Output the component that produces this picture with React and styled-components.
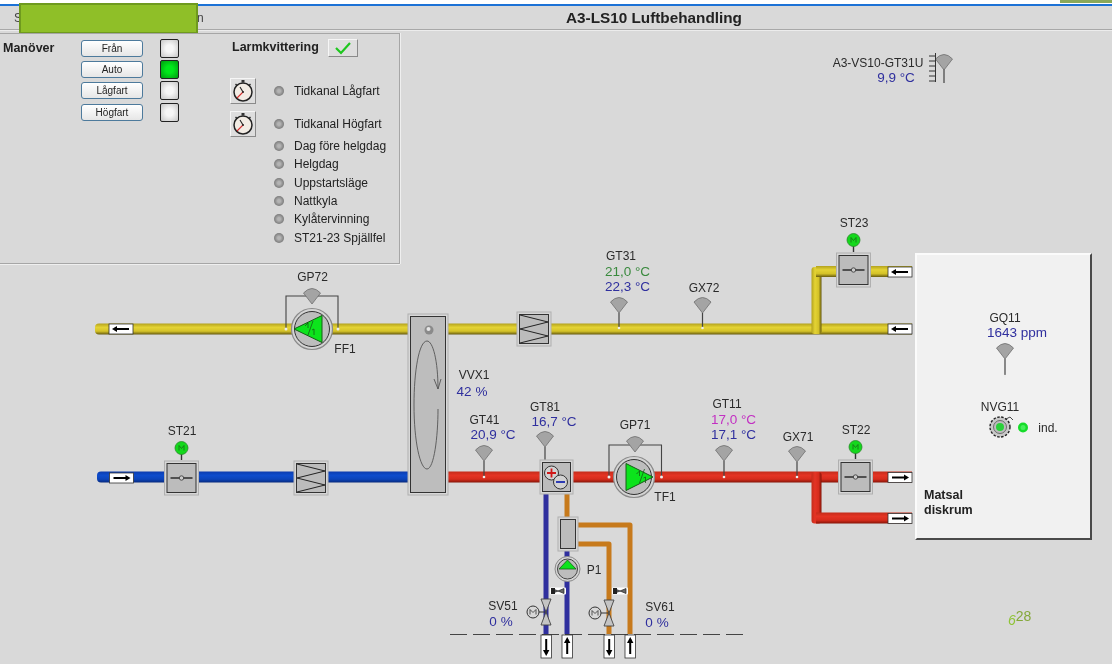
import React from "react";
import styled, { createGlobalStyle } from "styled-components";

const GlobalStyle = createGlobalStyle`
  html, body {
    margin: 0;
    padding: 0;
    background: #d9d9d9;
  }
  body {
    font-family: "Liberation Sans", Arial, sans-serif;
    color: #222;
    overflow: hidden;
  }
`;

const Page = styled.div`
  position: relative;
  width: 1112px;
  height: 664px;
  overflow: hidden;
  background: #d9d9d9;
  display: flex;
  flex-direction: column;
  filter: blur(0.5px);
`;

const TopStrip = styled.div`
  height: 4px;
  background: #fff;
  border-bottom: 2px solid #1c72d6;
  flex: none;
`;

const TitleBar = styled.div`
  flex: none;
  height: 23px;
  display: flex;
  align-items: center;
  padding-left: 14px;
  border-bottom: 1px solid #a8a8a8;
  box-shadow: 0 1px 0 #ececec;
  font-size: 12px;
  color: #444;
`;

const Crumb = styled.span`
  width: ${(props) => props.$w}px;
`;

const Title = styled.h1`
  margin: 0 0 0 363px;
  font-size: 15.3px;
  font-weight: bold;
  color: #222;
`;

const GreenMask = styled.div`
  position: absolute;
  left: 19px;
  top: 3px;
  width: 179px;
  height: 31px;
  box-sizing: border-box;
  background: #8fbf28;
  border: 2px solid #6f9a1e;
`;

const CornerMark = styled.div`
  position: absolute;
  right: 0;
  top: 0;
  width: 52px;
  height: 3px;
  background: #8aa85a;
`;

const Workspace = styled.div`
  position: relative;
  flex: 1;
  padding-top: 3px;
`;

const Panel = styled.section`
  position: relative;
  z-index: 1;
  width: 400px;
  height: 231px;
  box-sizing: border-box;
  display: flex;
  padding-top: 5px;
  border: 1px solid #a6a6a6;
  border-left: none;
  box-shadow: 0 1px 0 #efefef, 1px 0 0 #efefef;
`;

const BoldLabel = styled.div`
  font-size: 12.5px;
  font-weight: bold;
  line-height: 15px;
  color: #222;
`;

const ManeuverColumn = styled.div`
  width: 81px;
  box-sizing: border-box;
  padding: 2px 0 0 3px;
`;

const ControlColumn = styled.div`
  width: 149px;
  margin-top: -1.5px;
`;

const ControlRow = styled.div`
  display: grid;
  grid-template-columns: 62px 19px;
  column-gap: 17px;
  align-items: center;
  height: 21.3px;
`;

const ModeButton = styled.button`
  width: 62px;
  height: 17px;
  padding: 0;
  border: 1px solid #4d7a9c;
  border-radius: 3px;
  background: linear-gradient(#fff, #e6e6e6);
  font: 10px "Liberation Sans", Arial, sans-serif;
  color: #222;
`;

const ModeLamp = styled.div`
  width: 19px;
  height: 19px;
  box-sizing: border-box;
  border: 1px solid #222;
  border-radius: 2px;
  background: ${(props) =>
    props.$on
      ? "radial-gradient(circle, #00e81a 30%, #009a10 100%)"
      : "radial-gradient(circle, #f6f6f6 30%, #c6c6c6 100%)"};
`;

const StatusColumn = styled.div`
  width: 168px;
`;

const AlarmRow = styled.div`
  display: flex;
  align-items: center;
  height: 17px;
  padding-left: 2px;
  margin-bottom: 22px;
`;

const BevelButton = styled.button`
  display: flex;
  align-items: center;
  justify-content: center;
  padding: 0;
  width: ${(props) => props.$w}px;
  height: ${(props) => props.$h}px;
  margin-left: ${(props) => props.$ml || 0}px;
  background: #dedede;
  border: 1px solid;
  border-color: #f6f6f6 #8a8a8a #8a8a8a #f6f6f6;
`;

const ChannelRow = styled.div`
  display: grid;
  grid-template-columns: 44px 20px 1fr;
  align-items: center;
  height: ${(props) => props.$h}px;
  margin-bottom: ${(props) => props.$mb || 0}px;
  font-size: 12px;
  color: #222;
`;

const ChannelDot = styled.span`
  grid-column: 2;
  width: 10px;
  height: 10px;
  border-radius: 50%;
  background: radial-gradient(circle, #b4b4b4 20%, #5a5a5a 100%);
`;

const Canvas = styled.div`
  position: absolute;
  left: 0;
  top: -29px;
  width: 1112px;
  height: 664px;
`;

const DiagramArt = styled.svg`
  position: absolute;
  left: 0;
  top: 0;
`;

const Room = styled.div`
  position: absolute;
  left: 915px;
  top: 252px;
  width: 177px;
  height: 287px;
  box-sizing: border-box;
  background: #f1f1f1;
  border: 2px solid;
  border-color: #fbfbfb #4a4a4a #4a4a4a #fbfbfb;
  display: flex;
  flex-direction: column;
  justify-content: flex-end;
  padding: 0 0 20px 7px;
`;

const Tag = styled.div`
  position: absolute;
  left: ${(props) => props.$x}px;
  top: ${(props) => props.$y}px;
  transform: translate(-50%, -50%);
  white-space: nowrap;
  line-height: 1;
  font-size: ${(props) => (props.$tone ? 13.5 : 12)}px;
  color: ${(props) =>
    props.$tone === "green"
      ? "#3a8a3e"
      : props.$tone === "pink"
        ? "#c22fc2"
        : props.$tone === "blue"
          ? "#2f2f9e"
          : "#2a2a2a"};
`;

const PageMark = styled.div`
  position: absolute;
  left: 1008px;
  top: 612px;
  font-size: 14px;
  line-height: 1;
  font-style: italic;
  color: #8fc436;
`;

const MarkSup = styled.span`
  position: relative;
  top: -4px;
  font-style: normal;
  color: #84a83a;
`;

const labels = [
  { text: "A3-VS10-GT31U", x: 878, y: 62 },
  { text: "9,9 °C", x: 896, y: 77, tone: "blue" },
  { text: "GP72", x: 312.5, y: 276 },
  { text: "FF1", x: 345, y: 348 },
  { text: "ST21", x: 182, y: 430 },
  { text: "VVX1", x: 474, y: 374 },
  { text: "42 %", x: 472, y: 391, tone: "blue" },
  { text: "GT41", x: 484.5, y: 419 },
  { text: "20,9 °C", x: 493, y: 433.5, tone: "blue" },
  { text: "GT81", x: 545, y: 406 },
  { text: "16,7 °C", x: 554, y: 420.5, tone: "blue" },
  { text: "GP71", x: 635, y: 424 },
  { text: "TF1", x: 665, y: 496 },
  { text: "P1", x: 594, y: 569 },
  { text: "SV51", x: 503, y: 605 },
  { text: "0 %", x: 501, y: 621, tone: "blue" },
  { text: "SV61", x: 660, y: 606 },
  { text: "0 %", x: 657, y: 622, tone: "blue" },
  { text: "GT31", x: 621, y: 255 },
  { text: "21,0 °C", x: 627.5, y: 271, tone: "green" },
  { text: "22,3 °C", x: 627.5, y: 285.5, tone: "blue" },
  { text: "GX72", x: 704, y: 286.5 },
  { text: "GT11", x: 727, y: 403 },
  { text: "17,0 °C", x: 733.5, y: 419, tone: "pink" },
  { text: "17,1 °C", x: 733.5, y: 434, tone: "blue" },
  { text: "GX71", x: 798, y: 436 },
  { text: "ST22", x: 856, y: 429 },
  { text: "ST23", x: 854, y: 222 },
  { text: "GQ11", x: 1005, y: 317 },
  { text: "1643 ppm", x: 1017, y: 332, tone: "blue" },
  { text: "NVG11", x: 1000, y: 406 },
  { text: "ind.", x: 1048, y: 427 },
];

const channels = [
  { name: "Dag före helgdag" },
  { name: "Helgdag" },
  { name: "Uppstartsläge" },
  { name: "Nattkyla" },
  { name: "Kylåtervinning" },
  { name: "ST21-23 Spjällfel" },
];

const modes = [
  { name: "Från" },
  { name: "Auto", on: true },
  { name: "Lågfart" },
  { name: "Högfart" },
];

const CheckIcon = () => (
  <svg width="18" height="14" viewBox="0 0 18 14">
    <path d="M2 7 L7 12 L16 2" fill="none" stroke="#1ec71e" strokeWidth="2.2" />
  </svg>
);

const ClockIcon = () => (
  <svg width="24" height="24" viewBox="0 0 24 24">
    <rect x="10.5" y="1" width="3" height="2.5" fill="#333" />
    <line x1="4.5" y1="5" x2="6.5" y2="7" stroke="#333" strokeWidth="1.5" />
    <line x1="19.5" y1="5" x2="17.5" y2="7" stroke="#333" strokeWidth="1.5" />
    <circle cx="12" cy="13" r="9" fill="#f2ece4" stroke="#222" strokeWidth="1.5" />
    <line x1="12" y1="13" x2="9" y2="8" stroke="#222" strokeWidth="1.1" />
    <line x1="12" y1="13" x2="6" y2="19" stroke="#d63030" strokeWidth="1.1" />
    <circle cx="12" cy="13" r="1" fill="#222" />
  </svg>
);

const PipeGradients = () => (
  <defs>
    {[
      ["yellow", "#b3a21e", "#e4d334", "#d4c228", "#665a0e"],
      ["blue", "#0c3cae", "#0e4ccc", "#0c44ba", "#072a7e"],
      ["red", "#c42c1a", "#e43424", "#d62c1c", "#861408"],
    ].map(([id, a, b, c, d]) => (
      <React.Fragment key={id}>
        <linearGradient id={`${id}H`} x1="0" y1="0" x2="0" y2="1">
          <stop offset="0" stopColor={a} />
          <stop offset="0.35" stopColor={b} />
          <stop offset="0.7" stopColor={c} />
          <stop offset="1" stopColor={d} />
        </linearGradient>
        <linearGradient id={`${id}V`} x1="0" y1="0" x2="1" y2="0">
          <stop offset="0" stopColor={a} />
          <stop offset="0.35" stopColor={b} />
          <stop offset="0.7" stopColor={c} />
          <stop offset="1" stopColor={d} />
        </linearGradient>
      </React.Fragment>
    ))}
  </defs>
);

const PipeH = ({ x1, x2, y, color, r = 0 }) => (
  <rect x={x1} y={y - 5.5} width={x2 - x1} height="11" rx={r} fill={`url(#${color}H)`} />
);

const PipeV = ({ x, y1, y2, color }) => (
  <rect x={x - 5} y={y1} width="10" height={y2 - y1} rx="3" fill={`url(#${color}V)`} />
);

const ThinPipe = ({ d, color }) => (
  <path d={d} fill="none" stroke={color} strokeWidth="5" strokeLinejoin="round" />
);

const Bevel = ({ x, y, w, h }) => (
  <>
    <rect x={x} y={y} width={w} height={h} fill="#d6d6d6" stroke="#b0b0b0" />
    <rect x={x + 2.5} y={y + 2.5} width={w - 5} height={h - 5} fill="#bcbcbc" stroke="#333" />
  </>
);

const Sensor = ({ x, y, to }) => (
  <g>
    {to && <line x1={x} y1={y} x2={x} y2={to} stroke="#444" strokeWidth="1.2" />}
    <path
      d={`M${x} ${y} L${x - 8.5} ${y - 11} Q${x} ${y - 20} ${x + 8.5} ${y - 11} Z`}
      fill="#a4a4a4"
      stroke="#6e6e6e"
      strokeWidth="0.8"
    />
    {to && <circle cx={x} cy={to} r="1.3" fill="#eee" />}
  </g>
);

const Damper = ({ x, y }) => (
  <g>
    <line x1={x} y1={y - 18} x2={x} y2={y - 28} stroke="#333" strokeWidth="1.4" />
    <Bevel x={x - 17} y={y - 17} w={34} h={34} />
    <line x1={x - 11} y1={y} x2={x + 11} y2={y} stroke="#222" strokeWidth="1.4" />
    <circle cx={x} cy={y} r="2.2" fill="#ccc" stroke="#333" strokeWidth="0.8" />
    <circle cx={x} cy={y - 30} r="6.5" fill="#14d81c" stroke="#2a8a2a" strokeWidth="0.8" />
    <path
      d={`M${x - 2.5} ${y - 27.5} V${y - 32.5} L${x} ${y - 29.5} L${x + 2.5} ${y - 32.5} V${y - 27.5}`}
      fill="none"
      stroke="#166e16"
      strokeWidth="0.8"
    />
  </g>
);

const Coil = ({ x, y }) => (
  <g>
    <Bevel x={x - 17} y={y - 17} w={34} h={34} />
    <path
      d={`M${x - 14} ${y - 14} L${x + 14} ${y - 7} L${x - 14} ${y} L${x + 14} ${y + 7} L${x - 14} ${y + 14}`}
      fill="none"
      stroke="#222"
      strokeWidth="1"
    />
  </g>
);

const FlowTag = ({ x, y, dir }) => {
  const shaft = { left: `M${x + 20} ${y + 5} H${x + 7}`, right: `M${x + 4} ${y + 5} H${x + 17}` };
  const head = {
    left: `M${x + 3} ${y + 5} L${x + 8} ${y + 2} V${y + 8} Z`,
    right: `M${x + 21} ${y + 5} L${x + 16} ${y + 2} V${y + 8} Z`,
  };
  return (
    <g>
      <rect x={x} y={y} width="24" height="10" fill="#fff" stroke="#333" strokeWidth="0.8" />
      <path d={shaft[dir]} stroke="#000" strokeWidth="2" />
      <path d={head[dir]} fill="#000" />
    </g>
  );
};

const RiserTag = ({ x, dir }) => (
  <g>
    <rect x={x} y="634" width="10.5" height="23" fill="#fff" stroke="#333" strokeWidth="0.8" />
    <line x1={x + 5.2} y1="638" x2={x + 5.2} y2="653" stroke="#000" strokeWidth="2" />
    {dir === "down" ? (
      <path d={`M${x + 5.2} 655 L${x + 2} 649 H${x + 8.4} Z`} fill="#000" />
    ) : (
      <path d={`M${x + 5.2} 636 L${x + 2} 642 H${x + 8.4} Z`} fill="#000" />
    )}
  </g>
);

const Fan = ({ x, y, dir }) => {
  const tip = dir === "left" ? x - 18 : x + 19;
  const base = dir === "left" ? x + 10 : x - 8;
  const m = (tip + base) / 2;
  return (
    <g>
      <circle cx={x} cy={y} r="20.5" fill="#d4d4d4" stroke="#8a8a8a" strokeWidth="1.2" />
      <circle cx={x} cy={y} r="17.5" fill="#bdbdbd" stroke="#333" strokeWidth="1" />
      <path d={`M${tip} ${y} L${base} ${y - 13.5} V${y + 13.5} Z`} fill="#0ce41c" stroke="#165c16" />
      <path
        d={`M${m - 3} ${y - 3} l3 -3 v5 M${m + 5} ${y - 8} L${m} ${y + 6} M${m + 4} ${y + 1} l2 -1 v6`}
        fill="none"
        stroke="#165c16"
        strokeWidth="0.8"
      />
    </g>
  );
};

const Valve = ({ x, y, motorX }) => (
  <g>
    <line x1={motorX + 6} y1={y} x2={x} y2={y} stroke="#333" />
    <path
      d={`M${x - 5} ${y - 13} H${x + 5} L${x - 5} ${y + 13} H${x + 5} Z`}
      fill="#c4c4c4"
      stroke="#444"
      strokeWidth="0.9"
    />
    <circle cx={motorX} cy={y} r="6" fill="#d8d8d8" stroke="#333" />
    <path
      d={`M${motorX - 3} ${y + 2.5} V${y - 2.5} L${motorX} ${y + 0.5} L${motorX + 3} ${y - 2.5} V${y + 2.5}`}
      fill="none"
      stroke="#333"
      strokeWidth="0.8"
    />
  </g>
);

const BleedValve = ({ x, y }) => (
  <g>
    <rect x={x} y={y - 3.5} width="16" height="7" rx="1" fill="#fff" />
    <path
      d={`M${x + 2} ${y - 2.5} L${x + 14} ${y + 2.5} V${y - 2.5} L${x + 2} ${y + 2.5} Z`}
      fill="#666"
      stroke="#222"
      strokeWidth="0.7"
    />
    <rect x={x + 1} y={y - 3} width="4" height="6" fill="#222" />
  </g>
);

const Diagram = () => (
  <DiagramArt width="1112" height="664" viewBox="0 0 1112 664">
    <PipeGradients />

    {/* kanaler */}
    <PipeH x1={95} x2={412} y={328} color="yellow" r={4} />
    <PipeH x1={446} x2={912} y={328} color="yellow" />
    <PipeV x={816.5} y1={266} y2={333} color="yellow" />
    <PipeH x1={816} x2={912} y={270.5} color="yellow" />
    <PipeH x1={97} x2={412} y={476} color="blue" r={4} />
    <PipeH x1={446} x2={912} y={476} color="red" />
    <PipeV x={816.5} y1={471} y2={522.5} color="red" />
    <PipeH x1={816} x2={912} y={517} color="red" />

    {/* rör */}
    <ThinPipe d="M546 493 V633" color="#2f2f9e" />
    <ThinPipe d="M567 548 V633" color="#2f2f9e" />
    <ThinPipe d="M567 493 V517" color="#c77a1c" />
    <ThinPipe d="M578 524 H630 V633" color="#c77a1c" />
    <ThinPipe d="M578 543 H609 V633" color="#c77a1c" />
    <line x1="450" y1="633.5" x2="745" y2="633.5" stroke="#444" strokeDasharray="17 6" />
    <RiserTag x={541} dir="down" />
    <RiserTag x={562} dir="up" />
    <RiserTag x={604} dir="down" />
    <RiserTag x={625} dir="up" />

    {/* VVX */}
    <rect x="408" y="313" width="40" height="181" fill="#d8d8d8" stroke="#b0b0b0" />
    <rect x="410.5" y="315.5" width="35" height="176" fill="#bdbdbd" stroke="#333" />
    <circle cx="429" cy="329" r="4.5" fill="#8a8a8a" />
    <circle cx="428.5" cy="328" r="2" fill="#e6e6e6" />
    <path
      d="M438 388 C438 360 433 340 427 340 C419 340 414 370 414 404 C414 440 420 468 427 468 C434 468 438 436 438 408"
      fill="none"
      stroke="#555"
      strokeWidth="0.9"
    />
    <path d="M434 378 L438 388 L441 378" fill="none" stroke="#555" strokeWidth="0.9" />

    {/* givare med tryckuttag */}
    <path d="M286 328 V295 H338 V328" fill="none" stroke="#444" strokeWidth="1.1" />
    <circle cx="286" cy="328" r="1.5" fill="#eee" />
    <circle cx="338" cy="328" r="1.5" fill="#eee" />
    <path d="M609 476 V444 H661.5 V476" fill="none" stroke="#444" strokeWidth="1.1" />
    <circle cx="609" cy="476" r="1.5" fill="#eee" />
    <circle cx="661.5" cy="476" r="1.5" fill="#eee" />
    <Sensor x={312} y={303} />
    <Sensor x={635} y={451} />
    <Sensor x={619} y={312} to={327} />
    <Sensor x={702.5} y={312} to={327} />
    <Sensor x={484} y={460} to={476} />
    <Sensor x={545} y={446} to={460} />
    <Sensor x={724} y={460} to={476} />
    <Sensor x={797} y={461} to={476} />
    <Fan x={312} y={328} dir="left" />
    <Fan x={634} y={476} dir="right" />

    {/* utegivare */}
    <line x1="944" y1="66" x2="944" y2="82" stroke="#333" strokeWidth="1.1" />
    <Sensor x={944} y={69} />
    <path
      d="M935.5 52 V81 M929 55 H935 M929 60 H935 M929 65 H935 M929 70 H935 M929 75 H935 M929 80 H935"
      fill="none"
      stroke="#333"
      strokeWidth="1"
    />

    <Damper x={181.5} y={477} />
    <Damper x={853.5} y={269} />
    <Damper x={855.5} y={476} />
    <Coil x={311} y={477} />
    <Coil x={534} y={328} />

    {/* värme/kyla */}
    <Bevel x={540} y={459} w={33} h={34} />
    <circle cx="551.5" cy="472" r="7" fill="#d2d2d2" stroke="#333" />
    <path d="M547 472 H556 M551.5 467.5 V476.5" stroke="#d01818" strokeWidth="1.8" />
    <circle cx="560.5" cy="481" r="7" fill="#d2d2d2" stroke="#333" />
    <line x1="556" y1="481" x2="565" y2="481" stroke="#1a2ab0" strokeWidth="1.8" />

    {/* ackumulator och pump */}
    <Bevel x={558} y={516} w={20} h={34} />
    <circle cx="567.5" cy="568" r="12.5" fill="#d4d4d4" stroke="#8a8a8a" />
    <circle cx="567.5" cy="568" r="10" fill="#bdbdbd" stroke="#444" />
    <path d="M559 568 H576 L567.5 559 Z" fill="#0ce41c" stroke="#165c16" strokeWidth="0.8" />

    <BleedValve x={550} y={590} />
    <BleedValve x={612} y={590} />
    <Valve x={546} y={611} motorX={533} />
    <Valve x={609} y={612} motorX={595} />

    <FlowTag x={109} y={323} dir="left" />
    <FlowTag x={109.5} y={472} dir="right" />
    <FlowTag x={888} y={266} dir="left" />
    <FlowTag x={888} y={323} dir="left" />
    <FlowTag x={888} y={471.5} dir="right" />
    <FlowTag x={888} y={512.5} dir="right" />
  </DiagramArt>
);

const RoomArt = styled.svg`
  position: absolute;
  left: 985px;
  top: 340px;
`;

const RoomDevices = () => (
  <RoomArt width="50" height="100" viewBox="985 340 50 100">
    <Sensor x={1005} y={358} to={375} />
    <circle cx="1000" cy="426" r="10" fill="#c8c8c8" stroke="#222" strokeWidth="1.4" strokeDasharray="2.5 1.5" />
    <circle cx="1000" cy="426" r="6.5" fill="#bdbdbd" stroke="#555" strokeWidth="0.8" />
    <circle cx="1000" cy="426" r="4" fill="#2ad03a" />
    <path d="M1006 418 L1010 416 L1013 419" fill="none" stroke="#333" strokeWidth="0.9" />
    <circle cx="1023" cy="426.5" r="5" fill="#16dc2a" />
    <circle cx="1023" cy="426.5" r="2.5" fill="#46f05a" />
  </RoomArt>
);

export default function App() {
  return (
    <>
      <GlobalStyle />
      <Page>
        <TopStrip />
        <TitleBar>
          <Crumb $w={183}>S</Crumb>
          <Crumb $w={6}>n</Crumb>
          <Title>A3-LS10 Luftbehandling</Title>
        </TitleBar>
        <Workspace>
          <Canvas>
            <Room>
              <BoldLabel>Matsal</BoldLabel>
              <BoldLabel>diskrum</BoldLabel>
            </Room>
            <Diagram />
            <RoomDevices />
            {labels.map((label) => (
              <Tag key={`${label.text}-${label.x}`} $x={label.x} $y={label.y} $tone={label.tone}>
                {label.text}
              </Tag>
            ))}
            <PageMark>
              6<MarkSup>28</MarkSup>
            </PageMark>
          </Canvas>
          <Panel>
            <ManeuverColumn>
              <BoldLabel>Manöver</BoldLabel>
            </ManeuverColumn>
            <ControlColumn>
              {modes.map((mode) => (
                <ControlRow key={mode.name}>
                  <ModeButton>{mode.name}</ModeButton>
                  <ModeLamp $on={mode.on} />
                </ControlRow>
              ))}
            </ControlColumn>
            <StatusColumn>
              <AlarmRow>
                <BoldLabel>Larmkvittering</BoldLabel>
                <BevelButton $w={30} $h={18} $ml={9}>
                  <CheckIcon />
                </BevelButton>
              </AlarmRow>
              <ChannelRow $h={26} $mb={7}>
                <BevelButton $w={26} $h={26}>
                  <ClockIcon />
                </BevelButton>
                <ChannelDot />
                <span>Tidkanal Lågfart</span>
              </ChannelRow>
              <ChannelRow $h={26}>
                <BevelButton $w={26} $h={26}>
                  <ClockIcon />
                </BevelButton>
                <ChannelDot />
                <span>Tidkanal Högfart</span>
              </ChannelRow>
              {channels.map((channel) => (
                <ChannelRow key={channel.name} $h={18.3}>
                  <ChannelDot />
                  <span>{channel.name}</span>
                </ChannelRow>
              ))}
            </StatusColumn>
          </Panel>
        </Workspace>
        <GreenMask />
        <CornerMark />
      </Page>
    </>
  );
}
